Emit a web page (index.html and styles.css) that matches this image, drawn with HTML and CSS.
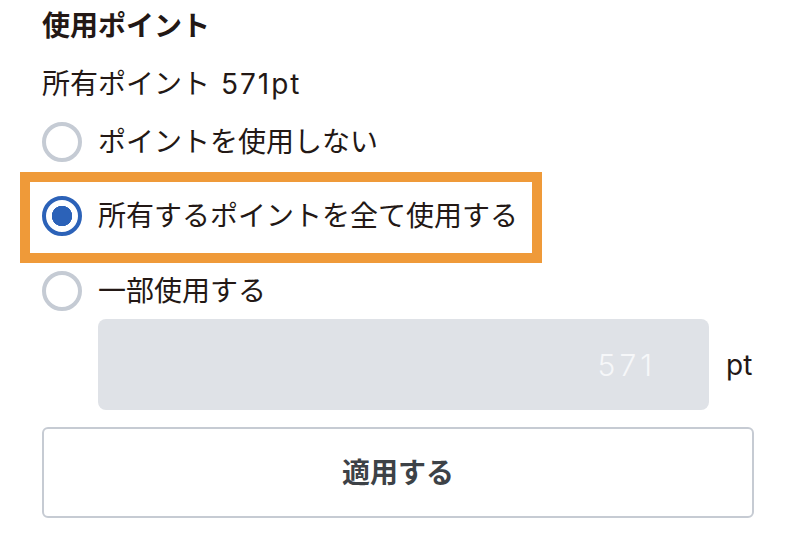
FILE: index.html
```html
<!DOCTYPE html>
<html lang="ja">
<head>
    <meta charset="UTF-8">
    <meta name="viewport" content="width=device-width, initial-scale=1.0">
    <title>使用ポイント</title>
    <link rel="stylesheet" href="styles.css">
</head>
<body>
    <div class="points">
        <h2 class="points-title">使用ポイント</h2>
        <p class="points-owned">所有ポイント <span class="num">571pt</span></p>

        <label class="option">
            <input type="radio" name="usePoint" value="none">
            <span>ポイントを使用しない</span>
        </label>

        <label class="option option-selected">
            <input type="radio" name="usePoint" value="all" checked>
            <span>所有するポイントを全て使用する</span>
        </label>

        <label class="option">
            <input type="radio" name="usePoint" value="part">
            <span>一部使用する</span>
        </label>

        <div class="amount">
            <input type="text" class="amount-input" value="571" disabled>
            <span class="amount-unit">pt</span>
        </div>

        <button type="button" class="apply-btn">適用する</button>
    </div>
</body>
</html>
```

FILE: styles.css
```css
body {
    margin: 0;
    background-color: #ffffff;
    font-family: Inter, "Noto Sans CJK JP", sans-serif;
    color: #231815;
}
.points {
    width: 712px;
    padding: 7px 0 0 42px;
    display: flex;
    flex-direction: column;
    align-items: flex-start;
}
.points-title {
    margin: 0;
    font-size: 28px;
    font-weight: bold;
    line-height: 38px;
}
.points-owned {
    margin: 20px 0 0;
    font-size: 28px;
    line-height: 38px;
}
.num {
    margin-left: 3px;
    letter-spacing: 2px;
}
.option {
    display: flex;
    align-items: center;
    gap: 16px;
    height: 40px;
    font-size: 28px;
    line-height: 40px;
    margin-top: 19px;
    cursor: pointer;
}
.option input {
    appearance: none;
    -webkit-appearance: none;
    margin: 0;
    width: 40px;
    height: 40px;
    border: 4px solid #c5cbd4;
    border-radius: 50%;
    box-sizing: border-box;
    background-color: #ffffff;
    flex-shrink: 0;
}
.option input:checked {
    border-color: #2c62b8;
    background: radial-gradient(circle, #2c62b8 0 10px, #ffffff 10.5px);
}
.option-selected {
    margin: 10px 0 0 -22px;
    height: 40px;
    padding: 14px 14px 17px 12px;
    border: 10px solid #ef9a39;
}
.option-selected + .option {
    margin-top: 8px;
}
.amount {
    display: flex;
    align-items: center;
    gap: 17px;
    margin: 8px 0 0 56px;
}
.amount-input {
    width: 611px;
    height: 91px;
    box-sizing: border-box;
    border: none;
    border-radius: 8px;
    background-color: #dfe2e7;
    padding: 0 53px 0 16px;
    text-align: right;
    font-family: Inter, "Noto Sans CJK JP", sans-serif;
    font-size: 30px;
    font-weight: 300;
    letter-spacing: 4px;
    color: #f6f7f9;
    -webkit-text-fill-color: #f6f7f9;
    opacity: 1;
}
.amount-unit {
    font-size: 28px;
}
.apply-btn {
    margin-top: 17px;
    width: 712px;
    height: 91px;
    padding: 0 0 4px;
    border: 2px solid #c6cbd3;
    border-radius: 6px;
    background-color: #ffffff;
    font-family: "Noto Sans CJK JP", sans-serif;
    font-size: 28px;
    font-weight: bold;
    color: #3d4247;
    cursor: pointer;
}
```
